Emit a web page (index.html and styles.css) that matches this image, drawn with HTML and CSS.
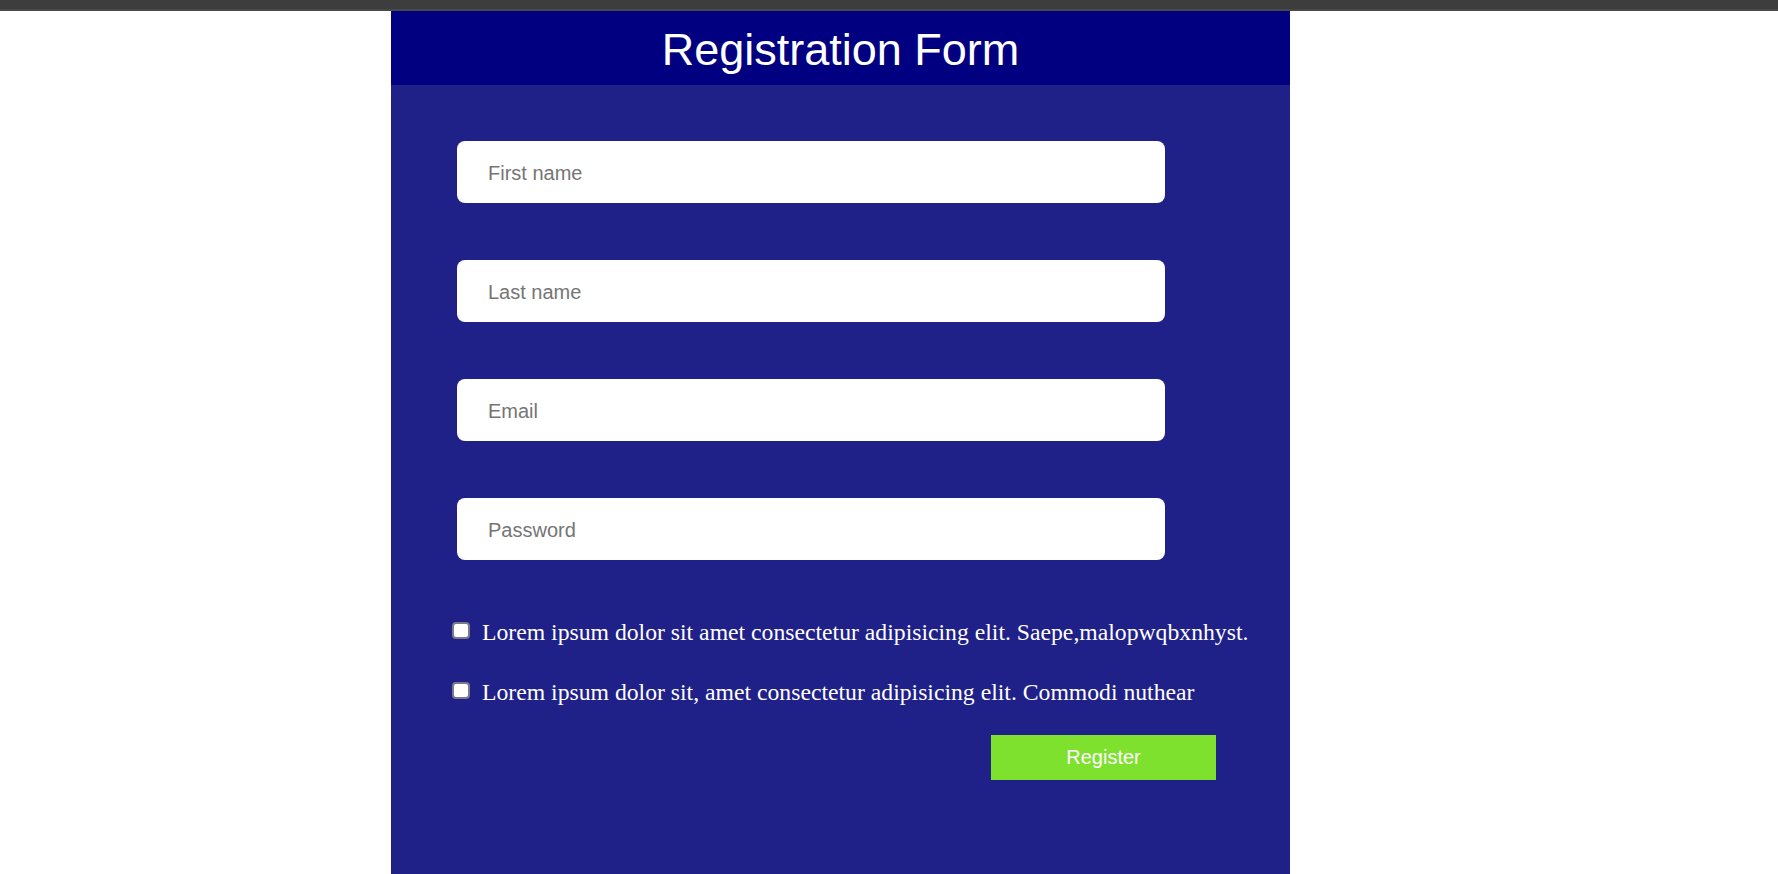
FILE: index.html
```html
<!DOCTYPE html>
<html>
<head>
<meta charset="utf-8">
<title>Registration Form</title>
<link rel="stylesheet" href="styles.css">
</head>
<body>
<div class="topbar"></div>
<div class="card">
  <div class="card-header"><h1 class="title">Registration Form</h1></div>
  <form class="form">
    <input class="field" type="text" placeholder="First name">
    <input class="field" type="text" placeholder="Last name">
    <input class="field" type="email" placeholder="Email">
    <input class="field" type="password" placeholder="Password">
    <label class="check-row"><input type="checkbox" class="check"><span>Lorem ipsum dolor sit amet consectetur adipisicing elit. Saepe,malopwqbxnhyst.</span></label>
    <label class="check-row"><input type="checkbox" class="check"><span>Lorem ipsum dolor sit, amet consectetur adipisicing elit. Commodi nuthear</span></label>
    <div class="actions"><button type="button" class="btn">Register</button></div>
  </form>
</div>
</body>
</html>
```
FILE: styles.css
```css
html, body {
  margin: 0;
  padding: 0;
  background: #ffffff;
  height: 100%;
}
body {
  font-family: "Liberation Sans", Arial, sans-serif;
  overflow: hidden;
}
.topbar {
  height: 9px;
  background: #3d3d3d;
  border-bottom: 2px solid #484848;
}
.card {
  margin-left: 391px;
  width: 899px;
  height: 863px;
  background: #202089;
}
.card-header {
  height: 74px;
  background: #000080;
  display: flex;
  align-items: center;
  justify-content: center;
}
.title {
  margin: 0;
  color: #ffffff;
  font-weight: normal;
  font-size: 45px;
  line-height: 1;
  font-family: "Liberation Sans", Arial, sans-serif;
  padding-top: 2px;
}
.form {
  display: flex;
  flex-direction: column;
  padding: 56px 0 0 66px;
}
.field {
  box-sizing: border-box;
  width: 708px;
  height: 62px;
  border: none;
  border-radius: 8px;
  background: #ffffff;
  padding: 2px 0 0 31px;
  margin: 0 0 57px 0;
  font-family: "Liberation Sans", Arial, sans-serif;
  font-size: 20px;
  color: #333;
  outline: none;
}
.field::placeholder {
  color: #757575;
}
.field:nth-of-type(4) {
  margin-bottom: 0;
}
.check-row {
  display: flex;
  align-items: center;
  margin-left: -5px;
  color: #ffffff;
  font-family: "Liberation Serif", "Times New Roman", serif;
  font-size: 23.7px;
  height: 30px;
}
.check-row:nth-of-type(1) {
  margin-top: 57px;
}
.check-row + .check-row {
  margin-top: 30px;
}
.check {
  -webkit-appearance: none;
  appearance: none;
  box-sizing: border-box;
  width: 18px;
  height: 17px;
  margin: 0 12px 4px 0;
  background: #ffffff;
  border: 2px solid #7a7a8a;
  border-radius: 4px;
  flex: none;
}
.actions {
  display: flex;
  margin-top: 28px;
  padding-left: 534px;
}
.btn {
  width: 225px;
  height: 45px;
  border: none;
  border-radius: 0;
  background: #7ee12e;
  color: #ffffff;
  font-family: "Liberation Sans", Arial, sans-serif;
  font-size: 20px;
  cursor: pointer;
}
```
